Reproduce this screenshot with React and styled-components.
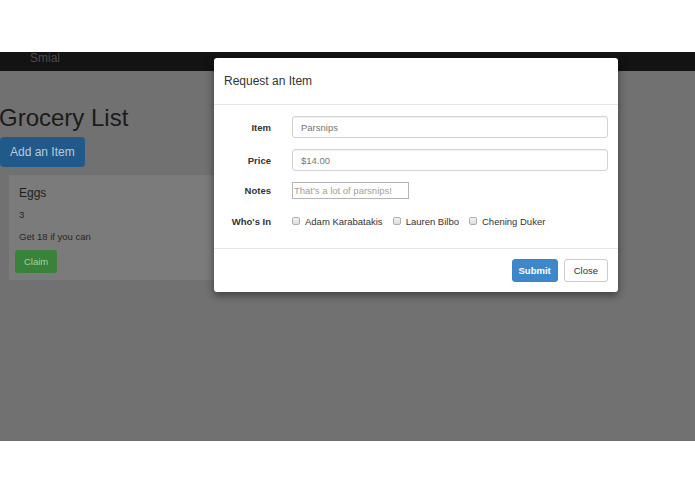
import React from "react";
import styled, { createGlobalStyle } from "styled-components";

const GlobalStyle = createGlobalStyle`
  html, body {
    margin: 0;
    padding: 0;
    background: #fff;
    font-family: "Liberation Sans", Arial, sans-serif;
    font-size: 9.5px;
    color: #333;
  }
`;

const Frame = styled.div`
  padding-top: 52px;
`;

const Screen = styled.div`
  position: relative;
  height: 389px;
  overflow: hidden;
  background: #717171;
`;

const NavBar = styled.div`
  height: 19px;
  background: #131313;
`;

const Brand = styled.div`
  padding-left: 30px;
  font-size: 12px;
  line-height: 13px;
  color: #4a4a4a;
`;

const Page = styled.div`
  display: flex;
  flex-direction: column;
  align-items: flex-start;
`;

const Heading = styled.h1`
  margin: 33px 0 0 -1px;
  font-size: 24px;
  line-height: 28px;
  font-weight: 400;
  color: #1b1b1b;
`;

const BigButton = styled.button`
  margin-top: 5px;
  height: 30px;
  padding: 0 10px;
  border: none;
  border-radius: 4px;
  background: #215a8a;
  color: #b9c9d8;
  font-family: inherit;
  font-size: 12px;
`;

const Card = styled.div`
  margin: 8px 0 0 9px;
  width: 220px;
  padding: 10px 6px 7px;
  box-sizing: border-box;
  background: #7b7b7b;
  display: flex;
  flex-direction: column;
  align-items: flex-start;
`;

const CardTitle = styled.div`
  padding-left: 4px;
  font-size: 12px;
  line-height: 16px;
  color: #1e1e1e;
`;

const CardText = styled.div`
  padding-left: 4px;
  margin-top: ${(p) => p.$gap}px;
  font-size: 9.5px;
  line-height: 12px;
  color: #262626;
`;

const SmallButton = styled.button`
  margin-top: 7px;
  height: 23px;
  padding: 0 9px;
  border: none;
  border-radius: 3px;
  background: #388339;
  color: #a6cfa6;
  font-family: inherit;
  font-size: 9.5px;
`;

const Modal = styled.div`
  position: absolute;
  top: 6px;
  left: 214px;
  width: 404px;
  background: #fff;
  border-radius: 3px;
  box-shadow: 0 3px 9px rgba(0, 0, 0, 0.5);
`;

const ModalHeader = styled.div`
  padding: 15px 10px 15px;
  border-bottom: 1px solid #e5e5e5;
  font-size: 12px;
  line-height: 16px;
  color: #333;
`;

const ModalBody = styled.div`
  padding: 11px 10px 16px;
  display: flex;
  flex-direction: column;
  gap: 11px;
`;

const FormRow = styled.div`
  display: grid;
  grid-template-columns: 47px 1fr;
  column-gap: 21px;
  align-items: center;
  min-height: ${(p) => p.$h}px;
`;

const Label = styled.label`
  text-align: right;
  font-weight: 700;
  font-size: 9.5px;
  color: #333;
`;

const TextInput = styled.input`
  height: 22px;
  box-sizing: border-box;
  padding: 0 8px;
  border: 1px solid #d3d3d3;
  border-radius: 3px;
  box-shadow: inset 0 1px 1px rgba(0, 0, 0, 0.06);
  font-family: inherit;
  font-size: 9.5px;
  color: #777;
  &::placeholder {
    color: #777;
  }
`;

const PlainInput = styled.input`
  width: 117px;
  height: 17px;
  box-sizing: border-box;
  padding: 0 1px;
  border: 1px solid #b5b5b5;
  font-family: inherit;
  font-size: 9.5px;
  color: #999;
  &::placeholder {
    color: #a0a0a0;
  }
`;

const CheckGroup = styled.div`
  display: flex;
  align-items: center;
  gap: 10px;
`;

const CheckLabel = styled.label`
  display: flex;
  align-items: center;
  gap: 5px;
  font-size: 9.5px;
  color: #333;
`;

const Box = styled.input`
  appearance: none;
  margin: 0;
  width: 8px;
  height: 8px;
  border: 1px solid #b0b0b0;
  border-radius: 2px;
  background: linear-gradient(#f4f4f4, #dcdcdc);
`;

const ModalFooter = styled.div`
  border-top: 1px solid #e5e5e5;
  padding: 10px;
  display: flex;
  justify-content: flex-end;
  gap: 6px;
`;

const FooterButton = styled.button`
  height: 23px;
  padding: 0 ${(p) => (p.$primary ? 6 : 9)}px;
  border: 1px solid ${(p) => (p.$primary ? "#3a85c6" : "#ccc")};
  border-radius: 3px;
  background: ${(p) => (p.$primary ? "#3d88c9" : "#fff")};
  color: ${(p) => (p.$primary ? "#fff" : "#333")};
  font-family: inherit;
  font-size: 9.5px;
  font-weight: ${(p) => (p.$primary ? 700 : 400)};
`;

const people = ["Adam Karabatakis", "Lauren Bilbo", "Chening Duker"];

export default function App() {
  return (
    <>
      <GlobalStyle />
      <Frame>
        <Screen>
          <NavBar>
            <Brand>Smial</Brand>
          </NavBar>
          <Page>
            <Heading>Grocery List</Heading>
            <BigButton>Add an Item</BigButton>
            <Card>
              <CardTitle>Eggs</CardTitle>
              <CardText $gap={8}>3</CardText>
              <CardText $gap={10}>Get 18 if you can</CardText>
              <SmallButton>Claim</SmallButton>
            </Card>
          </Page>

          <Modal>
            <ModalHeader>Request an Item</ModalHeader>
            <ModalBody>
              <FormRow $h={22}>
                <Label>Item</Label>
                <TextInput placeholder="Parsnips" />
              </FormRow>
              <FormRow $h={22}>
                <Label>Price</Label>
                <TextInput placeholder="$14.00" />
              </FormRow>
              <FormRow $h={17}>
                <Label>Notes</Label>
                <PlainInput placeholder="That's a lot of parsnips!" />
              </FormRow>
              <FormRow $h={22}>
                <Label>Who's In</Label>
                <CheckGroup>
                  {people.map((name) => (
                    <CheckLabel key={name}>
                      <Box type="checkbox" />
                      {name}
                    </CheckLabel>
                  ))}
                </CheckGroup>
              </FormRow>
            </ModalBody>
            <ModalFooter>
              <FooterButton $primary>Submit</FooterButton>
              <FooterButton>Close</FooterButton>
            </ModalFooter>
          </Modal>
        </Screen>
      </Frame>
    </>
  );
}
